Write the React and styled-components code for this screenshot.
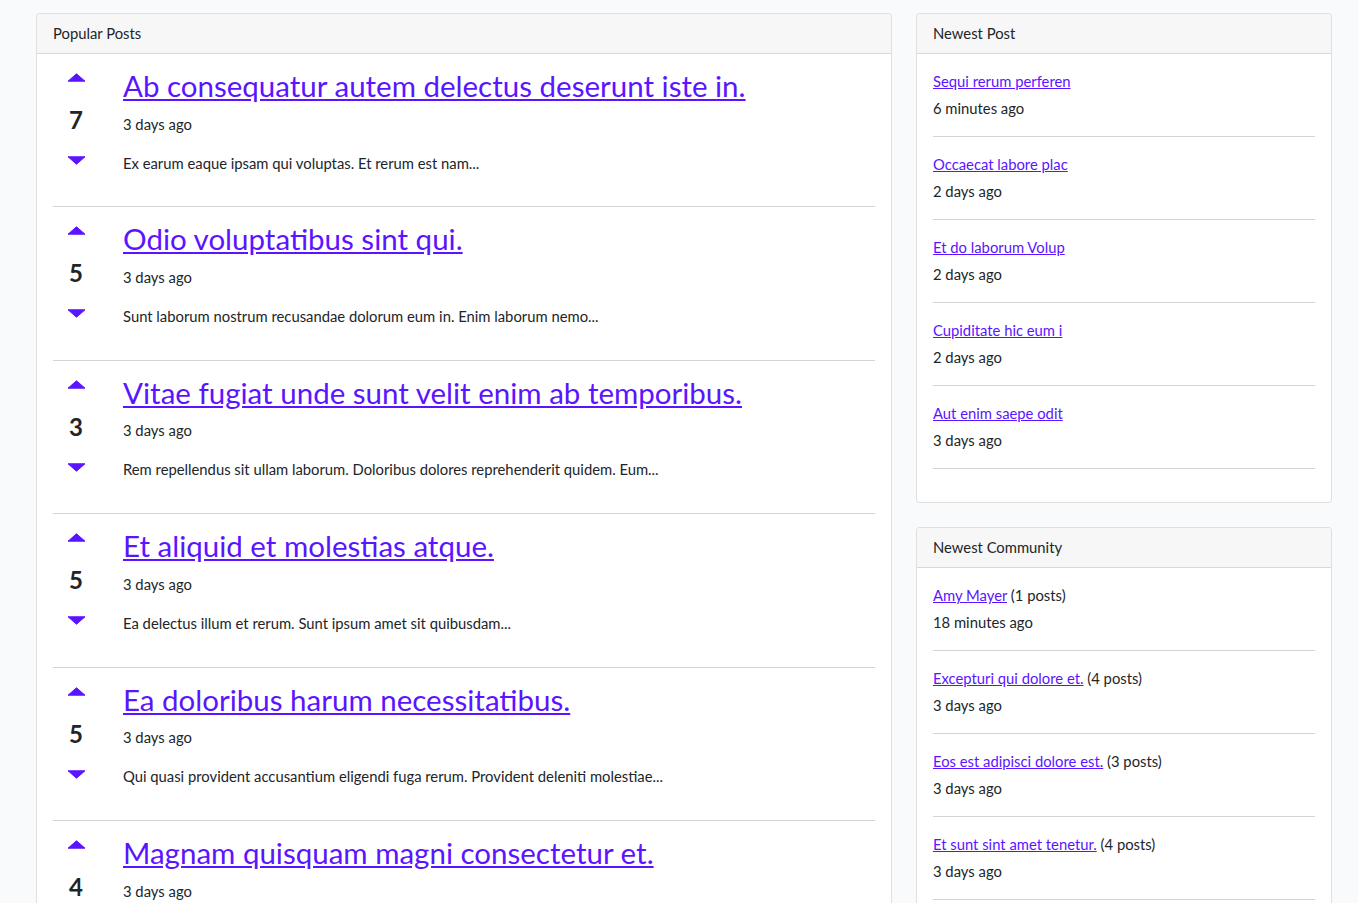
import React from 'react';
import styled, { createGlobalStyle } from 'styled-components';

const posts = [
  { votes: 7, title: 'Ab consequatur autem delectus deserunt iste in.', excerpt: 'Ex earum eaque ipsam qui voluptas. Et rerum est nam...' },
  { votes: 5, title: 'Odio voluptatibus sint qui.', excerpt: 'Sunt laborum nostrum recusandae dolorum eum in. Enim laborum nemo...' },
  { votes: 3, title: 'Vitae fugiat unde sunt velit enim ab temporibus.', excerpt: 'Rem repellendus sit ullam laborum. Doloribus dolores reprehenderit quidem. Eum...' },
  { votes: 5, title: 'Et aliquid et molestias atque.', excerpt: 'Ea delectus illum et rerum. Sunt ipsum amet sit quibusdam...' },
  { votes: 5, title: 'Ea doloribus harum necessitatibus.', excerpt: 'Qui quasi provident accusantium eligendi fuga rerum. Provident deleniti molestiae...' },
  { votes: 4, title: 'Magnam quisquam magni consectetur et.', excerpt: 'Voluptas et quia sed. Omnis aut rerum dolor quia...' },
];

const newestPosts = [
  { title: 'Sequi rerum perferen', time: '6 minutes ago' },
  { title: 'Occaecat labore plac', time: '2 days ago' },
  { title: 'Et do laborum Volup', time: '2 days ago' },
  { title: 'Cupiditate hic eum i', time: '2 days ago' },
  { title: 'Aut enim saepe odit', time: '3 days ago' },
];

const communities = [
  { name: 'Amy Mayer', count: 1, time: '18 minutes ago' },
  { name: 'Excepturi qui dolore et.', count: 4, time: '3 days ago' },
  { name: 'Eos est adipisci dolore est.', count: 3, time: '3 days ago' },
  { name: 'Et sunt sint amet tenetur.', count: 4, time: '3 days ago' },
  { name: 'Quia dolorem ut aut.', count: 2, time: '3 days ago' },
];

const GlobalStyle = createGlobalStyle`
  body {
    margin: 0;
    background: #f8fafc;
    font-family: Lato, "Noto Sans", sans-serif;
    font-size: 14.8px;
    line-height: 23px;
    color: #212529;
  }
  * { box-sizing: border-box; }
`;

const Page = styled.div`
  display: flex;
  align-items: flex-start;
  gap: 24px;
  padding: 13px 26px 0 36px;
`;

const MainCol = styled.div`
  width: 856px;
  flex-shrink: 0;
`;

const SideCol = styled.div`
  width: 416px;
  flex-shrink: 0;
  display: flex;
  flex-direction: column;
  gap: 24px;
`;

const Card = styled.div`
  background: #fff;
  border: 1px solid rgba(0, 0, 0, 0.125);
  border-radius: 4px;
  overflow: hidden;
`;

const CardHeader = styled.div`
  padding: 8px 16px;
  background: #f7f7f7;
  border-bottom: 1px solid rgba(0, 0, 0, 0.125);
`;

const CardBody = styled.div`
  padding: ${p => (p.$tight ? '0 16px' : '16px 16px 17px')};
`;

const PostRow = styled.div`
  display: flex;
  gap: 24px;
  padding: 17px 0 31.8px;
  border-bottom: 1px solid #d4d4d4;
`;

const VoteCol = styled.div`
  width: 46px;
  flex-shrink: 0;
  display: flex;
  flex-direction: column;
  align-items: center;
  padding-top: 2px;
`;

const VoteCount = styled.div`
  font-size: 24px;
  font-weight: 700;
  line-height: 29px;
  margin: ${p => p.$m};
`;

const PostContent = styled.div`
  flex: 1;
  min-width: 0;
`;

const PostTitle = styled.a`
  display: block;
  font-size: 29.5px;
  line-height: 33.6px;
  margin-top: -2px;
  margin-bottom: 10px;
  color: #5b14ff;
  text-decoration: underline;
  text-underline-offset: 2px;
  cursor: pointer;
`;

const Meta = styled.div`
  margin-bottom: ${p => p.$mb || 0}px;
`;

const SideItem = styled.div`
  padding-bottom: 16px;
  margin-bottom: 16px;
  border-bottom: 1px solid #d4d4d4;
`;

const SideLink = styled.a`
  color: #5b14ff;
  text-decoration: underline;
  cursor: pointer;
`;

const Caret = ({ down }) => (
  <svg width="19" height="9" viewBox="0 0 19 9">
    <polygon
      points={down ? '1,0.8 18,0.8 9.5,8.2' : '1,8.2 18,8.2 9.5,0.8'}
      fill="#5b14ff"
      stroke="#5b14ff"
      strokeWidth="1"
      strokeLinejoin="round"
    />
  </svg>
);

const App = () => (
  <>
    <GlobalStyle />
    <Page>
      <MainCol>
        <Card>
          <CardHeader>Popular Posts</CardHeader>
          <CardBody $tight>
            {posts.map((p, i) => (
              <PostRow key={i}>
                <VoteCol>
                  <Caret />
                  <VoteCount $m="23px 0 22px">{p.votes}</VoteCount>
                  <Caret down />
                </VoteCol>
                <PostContent>
                  <PostTitle>{p.title}</PostTitle>
                  <Meta $mb={16}>3 days ago</Meta>
                  <Meta>{p.excerpt}</Meta>
                </PostContent>
              </PostRow>
            ))}
          </CardBody>
        </Card>
      </MainCol>
      <SideCol>
        <Card>
          <CardHeader>Newest Post</CardHeader>
          <CardBody>
            {newestPosts.map((p, i) => (
              <SideItem key={i}>
                <Meta $mb={4}><SideLink>{p.title}</SideLink></Meta>
                <Meta>{p.time}</Meta>
              </SideItem>
            ))}
          </CardBody>
        </Card>
        <Card>
          <CardHeader>Newest Community</CardHeader>
          <CardBody>
            {communities.map((c, i) => (
              <SideItem key={i}>
                <Meta $mb={4}><SideLink>{c.name}</SideLink> ({c.count} posts)</Meta>
                <Meta>{c.time}</Meta>
              </SideItem>
            ))}
          </CardBody>
        </Card>
      </SideCol>
    </Page>
  </>
);

export default App;
